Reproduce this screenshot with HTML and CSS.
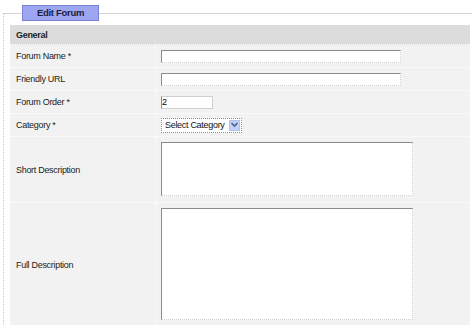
FILE: index.html
```html
<!DOCTYPE html>
<html lang="en">
<head>
    <meta charset="UTF-8">
    <title>Edit Forum</title>
    <link rel="stylesheet" href="styles.css">
</head>
<body>
    <!-- Edit Forum -->
    <fieldset class="panel">
        <legend class="tab"><span class="tab-text">Edit Forum</span></legend>
        <table class="form-table">
            <tr class="head-row">
                <td colspan="2">General</td>
            </tr>
            <tr class="row">
                <td class="label">Forum Name *</td>
                <td class="field"><input type="text" class="text-long"></td>
            </tr>
            <tr class="row">
                <td class="label">Friendly URL</td>
                <td class="field"><input type="text" class="text-long"></td>
            </tr>
            <tr class="row">
                <td class="label">Forum Order *</td>
                <td class="field"><input type="text" class="text-short" value="2"></td>
            </tr>
            <tr class="row">
                <td class="label">Category *</td>
                <td class="field">
                    <div class="select-box">
                        <span class="select-text">Select Category</span>
                        <span class="select-arrow">
                            <svg width="9" height="6" viewBox="0 0 9 6"><path d="M1.5 1 L4.5 4 L7.5 1" fill="none" stroke="#4d6185" stroke-width="1.6"/></svg>
                        </span>
                    </div>
                </td>
            </tr>
            <tr class="row">
                <td class="label">Short Description</td>
                <td class="field area-cell"><textarea class="area-short"></textarea></td>
            </tr>
            <tr class="row">
                <td class="label">Full Description</td>
                <td class="field area-cell"><textarea class="area-full"></textarea></td>
            </tr>
        </table>
    </fieldset>
</body>
</html>
```

FILE: styles.css
```css
/* General Styles */
body {
    margin: 0;
    padding: 5px 0 0 3px;
    font-family: "Liberation Sans", Arial, sans-serif;
    font-size: 9px;
    letter-spacing: -0.3px;
    color: #222;
    background: #fff;
    overflow: hidden;
}

.panel {
    width: 480px;
    margin: 0;
    padding: 4px 0 0 6px;
    border: none;
    border-top: 1px solid #d4d4d4;
    border-left: 1px dotted #c8c8c8;
}

/* Legend tab */
.tab {
    width: 75px;
    height: 14px;
    margin-left: 12px;
    padding: 0;
    background: #9ea6f2;
    border: 1px solid #7a80d6;
    text-align: left;
}

.tab-text {
    display: block;
    line-height: 14px;
    text-align: center;
    font-weight: bold;
    font-size: 9.5px;
    color: #1c1c3a;
}

.form-table {
    width: 460px;
    border-collapse: collapse;
}

.head-row td {
    height: 19px;
    padding: 0 6px;
    background: #dcdcdc;
    font-weight: bold;
    border-bottom: 1px dotted #fff;
}

.row td {
    height: 22px;
    background: #f2f2f2;
    border-bottom: 1px dotted #fff;
}

.label {
    width: 133px;
    padding: 0 6px;
    border-right: 1px dotted #fff;
}

.field {
    padding: 0 0 0 5px;
}

.area-cell {
    padding-top: 5px;
    padding-bottom: 6px;
}

input,
textarea {
    display: block;
    box-sizing: border-box;
    margin: 0;
    padding: 0 1px;
    background: #fff;
    border: 1px dotted #cfcfcf;
    border-top: 1px solid #8a8a8a;
    border-left: 1px solid #8a8a8a;
    font-family: "Liberation Sans", Arial, sans-serif;
    font-size: 9px;
    color: #000;
    resize: none;
}

.text-long {
    width: 240px;
    height: 13px;
}

.text-short {
    width: 52px;
    height: 13px;
    line-height: 11px;
    padding: 0;
    border: 1px solid #d0d0d0;
    border-left-color: #8a8a8a;
}

.area-short {
    width: 252px;
    height: 54px;
}

.area-full {
    width: 252px;
    height: 112px;
}

/* Fake select */
.select-box {
    display: flex;
    align-items: center;
    justify-content: space-between;
    box-sizing: border-box;
    width: 81px;
    height: 15px;
    padding: 0 1px 0 3px;
    background: #fff;
    border: 1px dotted #7f8fb9;
    color: #111;
    white-space: nowrap;
}

.select-arrow {
    display: flex;
    align-items: center;
    justify-content: center;
    width: 11px;
    height: 11px;
    background: #c3d1f7;
    border: 1px solid #b1c1ee;
    box-sizing: border-box;
}
```
